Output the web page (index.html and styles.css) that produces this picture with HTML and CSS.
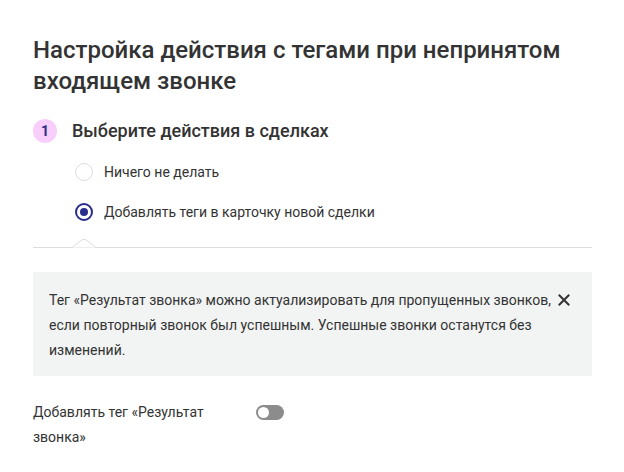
FILE: index.html
```html
<!DOCTYPE html>
<html lang="ru">
<head>
<meta charset="utf-8">
<link rel="stylesheet" href="styles.css">
</head>
<body>
<main class="page">
  <h1 class="title">Настройка действия с тегами при непринятом входящем звонке</h1>

  <section class="step">
    <div class="step-head">
      <span class="badge">1</span>
      <h2 class="step-title">Выберите действия в сделках</h2>
    </div>
    <div class="options">
      <label class="option">
        <span class="radio"></span>
        <span class="option-text">Ничего не делать</span>
      </label>
      <label class="option">
        <span class="radio radio-checked"></span>
        <span class="option-text">Добавлять теги в карточку новой сделки</span>
      </label>
    </div>
  </section>

  <div class="divider">
    <svg class="notch" width="24" height="9" viewBox="0 0 24 9">
      <path d="M0 8.5 L10 0.9 Q12 -0.4 14 0.9 L24 8.5" fill="#fff" stroke="#dcdcdc" stroke-width="1"/>
    </svg>
  </div>

  <div class="notice">
    <p class="notice-text">Тег «Результат звонка» можно актуализировать для пропущенных звонков, если повторный звонок был успешным. Успешные звонки останутся без изменений.</p>
    <svg class="close" width="12" height="12" viewBox="0 0 12 12">
      <path d="M1.5 1.5 L10.5 10.5 M10.5 1.5 L1.5 10.5" stroke="#333" stroke-width="2" stroke-linecap="square"/>
    </svg>
  </div>

  <div class="setting">
    <span class="setting-label">Добавлять тег «Результат звонка»</span>
    <span class="toggle"><span class="knob"></span></span>
  </div>
</main>
</body>
</html>
```

FILE: styles.css
```css
* { box-sizing: border-box; }
html, body { margin: 0; padding: 0; background: #fff; }
body {
  font-family: Roboto, "Noto Sans", sans-serif;
  color: #333;
  width: 624px;
  height: 472px;
  overflow: hidden;
}
.page {
  padding: 35px 32px 0 33px;
}
.title {
  margin: 0;
  font-size: 24px;
  line-height: 31px;
  font-weight: 500;
  color: #333;
}
.step { margin-top: 21px; }
.step-head {
  display: flex;
  align-items: center;
  gap: 15px;
  height: 26px;
}
.badge {
  width: 24px;
  height: 24px;
  border-radius: 50%;
  background: #f8cefb;
  color: #2b2d8c;
  font-size: 14px;
  font-weight: 700;
  display: flex;
  align-items: center;
  justify-content: center;
}
.step-title {
  margin: 0;
  font-size: 18px;
  font-weight: 500;
  line-height: 26px;
  color: #333;
}
.options {
  display: flex;
  flex-direction: column;
  gap: 20px;
  margin-top: 18px;
  padding-left: 42px;
}
.option {
  display: flex;
  align-items: center;
  gap: 11px;
  height: 20px;
  font-size: 14px;
  line-height: 20px;
  color: #333;
}
.radio {
  width: 18px;
  height: 18px;
  border-radius: 50%;
  border: 1px solid #dcdcdc;
  background: #fff;
  display: flex;
  align-items: center;
  justify-content: center;
}
.radio-checked {
  border: 2px solid #2b2d8c;
}
.radio-checked::after {
  content: "";
  width: 8px;
  height: 8px;
  border-radius: 50%;
  background: #2b2d8c;
}
.divider {
  margin-top: 25px;
  border-top: 1px solid #dcdcdc;
  position: relative;
  height: 0;
}
.notch {
  position: absolute;
  left: 39px;
  top: -9px;
}
.notice {
  margin-top: 24px;
  background: #f2f3f3;
  padding: 16px 22px 13px 16px;
  display: flex;
  align-items: flex-start;
  gap: 6px;
}
.notice-text {
  margin: 0;
  font-size: 14px;
  line-height: 25px;
  color: #333;
  flex: 1;
}
.close {
  margin-top: 6px;
  flex: none;
}
.setting {
  margin-top: 24px;
  display: grid;
  grid-template-columns: 223px 28px;
  align-items: start;
}
.setting-label {
  font-size: 14px;
  line-height: 25px;
  color: #333;
  max-width: 190px;
}
.toggle {
  margin-top: 5px;
  width: 28px;
  height: 15px;
  border-radius: 8px;
  background: #8c8c8c;
  display: flex;
  align-items: center;
  padding-left: 2px;
}
.knob {
  width: 11px;
  height: 11px;
  border-radius: 50%;
  background: #fff;
}
```
